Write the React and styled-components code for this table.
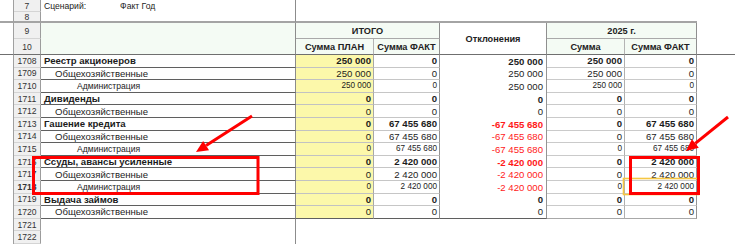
import React from "react";
import styled, { createGlobalStyle, css } from "styled-components";

const GlobalStyle = createGlobalStyle`
  html, body { margin: 0; padding: 0; background: #fff; }
  body { font-family: "Liberation Sans", Arial, sans-serif; }
`;

const rows = [
  { n: 1708, label: "Реестр акционеров", lvl: 0, v: ["250 000", "0", "250 000", "250 000", "0"] },
  { n: 1709, label: "Общехозяйственные", lvl: 1, v: ["250 000", "0", "250 000", "250 000", "0"] },
  { n: 1710, label: "Администрация", lvl: 2, v: ["250 000", "0", "250 000", "250 000", "0"] },
  { n: 1711, label: "Дивиденды", lvl: 0, v: ["0", "0", "0", "0", "0"] },
  { n: 1712, label: "Общехозяйственные", lvl: 1, v: ["0", "0", "0", "0", "0"] },
  { n: 1713, label: "Гашение кредита", lvl: 0, v: ["0", "67 455 680", "-67 455 680", "0", "67 455 680"] },
  { n: 1714, label: "Общехозяйственные", lvl: 1, v: ["0", "67 455 680", "-67 455 680", "0", "67 455 680"] },
  { n: 1715, label: "Администрация", lvl: 2, v: ["0", "67 455 680", "-67 455 680", "0", "67 455 680"] },
  { n: 1716, label: "Ссуды, авансы усиленные", lvl: 0, v: ["0", "2 420 000", "-2 420 000", "0", "2 420 000"] },
  { n: 1717, label: "Общехозяйственные", lvl: 1, v: ["0", "2 420 000", "-2 420 000", "0", "2 420 000"] },
  { n: 1718, label: "Администрация", lvl: 2, v: ["0", "2 420 000", "-2 420 000", "0", "2 420 000"] },
  { n: 1719, label: "Выдача займов", lvl: 0, v: ["0", "0", "0", "0", "0"] },
  { n: 1720, label: "Общехозяйственные", lvl: 1, v: ["0", "0", "0", "0", "0"] },
];

const kinds = ["plan", "fact", "diff", "sum", "sumfact"];

const Sheet = styled.div`
  position: relative;
  width: 735px;
  height: 244px;
  overflow: hidden;
  display: grid;
  grid-template-columns: 14px 27px 255px 78px 66px 107px 78px 72px 1fr;
  grid-template-rows: 12px 11px 16px 16px repeat(15, 12.6px);
  color: #1c1c1c;
`;

const base = css`
  box-sizing: border-box;
  min-width: 0;
  overflow: hidden;
  white-space: nowrap;
  display: flex;
  align-items: center;
`;

const Gutter = styled.div`
  ${base};
  border-right: 1px solid #a0a0a0;
  ${(p) => p.$rule && `border-bottom: 2px solid #a4a4a4;`}
  ${(p) => p.$freeze && `border-bottom: 1px solid #6f6f6f;`}
`;

const RowNum = styled.div`
  ${base};
  justify-content: center;
  background: #f0f0f0;
  border-right: 1px solid #9c9c9c;
  border-bottom: 1px solid #d4d4d4;
  font-size: 8.6px;
  color: #333;
  font-weight: ${(p) => (p.$active ? 700 : 400)};
  ${(p) => p.$rule && `border-bottom: 2px solid #a4a4a4;`}
  ${(p) => p.$freeze && `border-bottom: 1px solid #6f6f6f;`}
`;

const Scenario = styled.div`
  ${base};
  gap: 34px;
  padding-left: 3px;
  font-size: 8.6px;
  border-right: 1px solid #8c8c8c;
  ${(p) => p.$rule && `border-bottom: 2px solid #a4a4a4;`}
`;

const Blank = styled.div`
  ${base};
  ${(p) => p.$rule && `border-bottom: 2px solid #a4a4a4;`}
`;

const HeadCorner = styled.div`
  ${base};
  grid-row: span 2;
  background: #f4fbf4;
  border-right: 1px solid #8c8c8c;
  border-bottom: 1px solid #6f6f6f;
`;

const Head = styled.div`
  ${base};
  justify-content: center;
  font-size: 9.2px;
  font-weight: 700;
  color: #222;
  background: ${(p) => (p.$plain ? "#fff" : "#f4fbf4")};
  grid-column: span ${(p) => p.$cols || 1};
  grid-row: span ${(p) => p.$rows || 1};
  border-right: ${(p) => (p.$thin ? "1px solid #b4b4b4" : "1px solid #8f8f8f")};
  border-bottom: ${(p) => (p.$bottom ? "1px solid #6f6f6f" : "1px solid #a9a9a9")};
`;

const FillRight = styled.div`
  ${base};
  grid-row: span 2;
  border-bottom: 1px solid #6f6f6f;
`;

const labelSizes = ["9.6px", "9.6px", "8.6px"];
const labelPads = ["3px", "14px", "36px"];

const Label = styled.div`
  ${base};
  padding-left: ${(p) => labelPads[p.$lvl]};
  font-size: ${(p) => labelSizes[p.$lvl]};
  font-weight: ${(p) => (p.$lvl === 0 ? 700 : 400)};
  border-right: 1px solid #8c8c8c;
  ${(p) => p.$data && `border-bottom: 1px solid #5f5f5f;`}
`;

const numBorders = {
  plan: { right: "#a8a8a8", bottom: "#c2c2c2" },
  fact: { right: "#949494", bottom: "#c6c6c6" },
  diff: { right: "#949494", bottom: null },
  sum: { right: "#b0b0b0", bottom: "#cacaca" },
  sumfact: { right: "#949494", bottom: "#cacaca" },
};

const Num = styled.div`
  ${base};
  justify-content: flex-end;
  padding-right: ${(p) => (p.$kind === "diff" ? "3px" : "2px")};
  background: ${(p) => (p.$kind === "plan" ? "#fcf8aa" : "#fff")};
  font-size: ${(p) => (p.$small ? "8.2px" : "9.6px")};
  font-weight: ${(p) => (p.$lvl === 0 ? 700 : 400)};
  color: ${(p) => (p.$neg ? "#ff1a1a" : "#1c1c1c")};
  border-right: 1px solid ${(p) => numBorders[p.$kind].right};
  ${(p) =>
    p.$last
      ? `border-bottom: 1px solid ${p.$kind === "sum" || p.$kind === "sumfact" ? "#a8a8a8" : "#5f5f5f"};`
      : numBorders[p.$kind].bottom && `border-bottom: 1px solid ${numBorders[p.$kind].bottom};`}
`;

const Marks = styled.svg`
  position: absolute;
  left: 0;
  top: 0;
  pointer-events: none;
`;

function Arrow({ from, to }) {
  const dx = to[0] - from[0];
  const dy = to[1] - from[1];
  const len = Math.hypot(dx, dy);
  const ux = dx / len;
  const uy = dy / len;
  const bx = to[0] - 12 * ux;
  const by = to[1] - 12 * uy;
  const px = -uy * 5.5;
  const py = ux * 5.5;
  return (
    <g fill="#ff0000" stroke="#ff0000">
      <line x1={from[0]} y1={from[1]} x2={bx} y2={by} strokeWidth="3" />
      <polygon
        stroke="none"
        points={`${to[0]},${to[1]} ${bx + px},${by + py} ${bx - px},${by - py}`}
      />
    </g>
  );
}

export default function App() {
  return (
    <>
      <GlobalStyle />
      <Sheet>
        {/* row 7 */}
        <Gutter />
        <RowNum>7</RowNum>
        <Scenario>
          <span>Сценарий:</span>
          <span>Факт Год</span>
        </Scenario>
        <Blank />
        <Blank />
        <Blank />
        <Blank />
        <Blank />
        <Blank />

        {/* row 8 */}
        <Gutter $rule />
        <RowNum $rule>8</RowNum>
        <Scenario $rule />
        <Blank $rule />
        <Blank $rule />
        <Blank $rule />
        <Blank $rule />
        <Blank $rule />
        <Blank />

        {/* rows 9-10 header */}
        <Gutter />
        <RowNum>9</RowNum>
        <HeadCorner />
        <Head $cols={2}>ИТОГО</Head>
        <Head $rows={2} $plain $bottom>Отклонения</Head>
        <Head $cols={2}>2025 г.</Head>
        <FillRight />

        <Gutter $freeze />
        <RowNum $freeze>10</RowNum>
        <Head $bottom $thin>Сумма ПЛАН</Head>
        <Head $bottom>Сумма ФАКТ</Head>
        <Head $bottom $thin>Сумма</Head>
        <Head $bottom>Сумма ФАКТ</Head>

        {rows.map((r, i) => {
          const last = i === rows.length - 1;
          return (
            <React.Fragment key={r.n}>
              <Gutter />
              <RowNum $active={r.n === 1718}>{r.n}</RowNum>
              <Label $lvl={r.lvl} $data>
                {r.label}
              </Label>
              {r.v.map((val, k) => (
                <Num
                  key={k}
                  $kind={kinds[k]}
                  $lvl={r.lvl}
                  $small={r.lvl === 2 && kinds[k] !== "diff"}
                  $neg={val.startsWith("-")}
                  $last={last}
                >
                  {val}
                </Num>
              ))}
              <Blank />
            </React.Fragment>
          );
        })}

        {[1721, 1722].map((n) => (
          <React.Fragment key={n}>
            <Gutter />
            <RowNum>{n}</RowNum>
            <Label $lvl={0} />
            <Blank />
            <Blank />
            <Blank />
            <Blank />
            <Blank />
            <Blank />
          </React.Fragment>
        ))}

        <Marks width="735" height="244" viewBox="0 0 735 244">
          <rect x="623.5" y="178.5" width="75" height="16" fill="none" stroke="#f6c744" strokeWidth="1.6" />
          <rect x="33.5" y="157.5" width="224.5" height="36" fill="none" stroke="#ff0000" strokeWidth="3" />
          <rect x="630.5" y="157.5" width="68" height="36" fill="none" stroke="#ff0000" strokeWidth="3" />
          <Arrow from={[252, 116]} to={[196, 152]} />
          <Arrow from={[728, 117]} to={[686, 151]} />
        </Marks>
      </Sheet>
    </>
  );
}
